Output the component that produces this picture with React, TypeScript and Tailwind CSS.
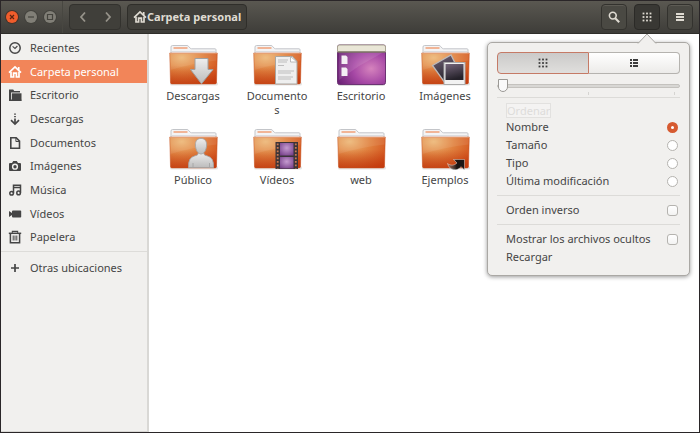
import { useState } from 'react';
import type { ReactNode } from 'react';

/* ---------- symbolic icons ---------- */

type IconName =
  | 'clock' | 'home' | 'desktop' | 'download' | 'document'
  | 'camera' | 'music' | 'video' | 'trash' | 'plus';

const glyphs: Record<IconName, ReactNode> = {
  clock: (
    <g fill="none" stroke="currentColor">
      <circle cx="7" cy="7" r="5.2" strokeWidth="1.5" />
      <path d="M4.6 5.4 7 7.5 9.4 5" strokeWidth="1.1" />
    </g>
  ),
  home: (
    <g fill="none" stroke="currentColor" strokeWidth="1.7">
      <path d="M1 7.6 7 2l6 5.6" />
      <path d="M3 6.8V12h2.6V8.2h2.8V12H11V6.8M10.7 2v3" />
    </g>
  ),
  desktop: (
    <g fill="currentColor">
      <path d="M1 1.500h4.200l1 1.500H12v1.500H3V12H1z" />
      <path d="M3.800 5.300h9.700V13H3.800z" />
      <path d="M1 11.500h12.300V13H1z" />
    </g>
  ),
  download: (
    <g fill="none" stroke="currentColor" strokeWidth="1.7">
      <path d="M7 1.500v1.300M7 4v1.200M7 6.400V12" />
      <path d="M3 8.200 7 12l4-3.800" />
    </g>
  ),
  document: (
    <g fill="none" stroke="currentColor" strokeWidth="1.6">
      <path d="M2.800 1.800h5.400l3.300 3.300v7.200H2.800z" />
      <path d="M7.900 2v3.500h3.500" strokeWidth="1" />
    </g>
  ),
  camera: (
    <path
      fill="currentColor"
      fillRule="evenodd"
      d="M2 4h2l1.200-2h3.600L10 4h2q1 0 1 1v6q0 1-1 1H2q-1 0-1-1V5q0-1 1-1zM7 4.600a3.100 3.100 0 1 0 0 6.200 3.100 3.100 0 0 0 0-6.200zM7 6a1.700 1.700 0 1 1 0 3.400A1.700 1.700 0 0 1 7 6z"
    />
  ),
  music: (
    <g fill="none" stroke="currentColor" strokeWidth="1.5">
      <path d="M5.500 10.300V2.200h7v7.500M5.500 4.400h7" />
      <circle cx="3.600" cy="10.300" r="1.800" />
      <circle cx="10.600" cy="9.900" r="1.800" />
    </g>
  ),
  video: <path fill="currentColor" d="M1 4l3 2V4.400q0-1 1-1h7.400q.8 0 .8.800v5.600q0 .8-.8.800H5q-1 0-1-1V8l-3 2z" />,
  trash: (
    <g fill="none" stroke="currentColor">
      <path d="M.800 3.300h12.400" strokeWidth="1.500" />
      <path d="M4.400 2.800V1.300h5.200v1.500" strokeWidth="1.200" />
      <path d="M2.400 4v8.800h9.200V4" strokeWidth="1.500" />
      <path d="M5.200 5.500v5M7 5.500v5M8.800 5.500v5" />
    </g>
  ),
  plus: <path d="M7 3v8M3 7h8" fill="none" stroke="currentColor" strokeWidth="1.700" />,
};

function Icon({ name, className = 'size-3.5' }: { name: IconName; className?: string }) {
  return (
    <svg viewBox="0 0 14 14" className={`shrink-0 ${className}`} aria-hidden="true">
      {glyphs[name]}
    </svg>
  );
}

function GridGlyph() {
  return (
    <svg viewBox="0 0 10 10" className="size-2.5" fill="currentColor" aria-hidden="true">
      {[0.6, 4.1, 7.6].flatMap((y) =>
        [0.6, 4.1, 7.6].map((x) => <rect key={`${x}-${y}`} x={x} y={y} width="1.8" height="1.8" />),
      )}
    </svg>
  );
}

/* ---------- folder artwork ---------- */

function Gradients() {
  return (
    <svg className="absolute size-0" aria-hidden="true">
      <defs>
        <radialGradient id="folder" cx="0.25" cy="0.15" r="1">
          <stop offset="0" stopColor="#edb878" />
          <stop offset="0.45" stopColor="#e0813f" />
          <stop offset="1" stopColor="#cf4512" />
        </radialGradient>
        <linearGradient id="shade" x1="0" y1="0" x2="0" y2="1">
          <stop offset="0.4" stopColor="#b8330c" stopOpacity="0" />
          <stop offset="1" stopColor="#b8330c" stopOpacity="0.5" />
        </linearGradient>
        <linearGradient id="silver" x1="0" y1="0" x2="0" y2="1">
          <stop offset="0" stopColor="#eeeeee" />
          <stop offset="1" stopColor="#bcbcbc" />
        </linearGradient>
        <radialGradient id="desk" cx="0.7" cy="0.6" r="0.75">
          <stop offset="0" stopColor="#d583bd" />
          <stop offset="0.5" stopColor="#a648a5" />
          <stop offset="1" stopColor="#6d2377" />
        </radialGradient>
        <linearGradient id="photo" x1="0" y1="0" x2="0.3" y2="1">
          <stop offset="0" stopColor="#75667b" />
          <stop offset="1" stopColor="#25222a" />
        </linearGradient>
        <radialGradient id="frame" cx="0.5" cy="0.4" r="0.7">
          <stop offset="0" stopColor="#c59bd0" />
          <stop offset="1" stopColor="#77408a" />
        </radialGradient>
        <linearGradient id="arrow" x1="0" y1="0" x2="1" y2="0">
          <stop offset="0" stopColor="#8b7f7a" stopOpacity="0.6" />
          <stop offset="0.55" stopColor="#1b1513" />
        </linearGradient>
      </defs>
    </svg>
  );
}

function FolderBase() {
  return (
    <>
      <rect x="1" y="38" width="48" height="3.500" rx="1.500" fill="#000" opacity="0.1" />
      <path d="M2 12V3q0-1.500 1.500-1.500h14.500q1 0 1.700 1l1.300 1.500q.6.800 1.600.800h23.400q1 0 1 1v6z" fill="#f4f4f5" stroke="#c3c5c9" />
      <path d="M4.500 4h14" stroke="#f0a177" strokeWidth="1.500" />
      <path d="M3 7.500h43" stroke="#dcdde0" />
      <path d="M.7 9h47.600l-.8 29.500q-.1 1.500-1.500 1.500H3q-1.400 0-1.500-1.500z" fill="url(#folder)" />
      <path d="M.7 9h47.600l-.8 29.500q-.1 1.500-1.500 1.500H3q-1.400 0-1.500-1.500z" fill="url(#shade)" stroke="#c4501f" strokeOpacity="0.6" strokeWidth="0.800" />
      <path d="M1.200 9.500h46.600l-.2 7Q25 19 1.500 26z" fill="#fff" opacity="0.08" />
      <path d="M1 9.500h47" stroke="#e9a983" strokeOpacity="0.6" />
    </>
  );
}

const emblems: Record<string, ReactNode> = {
  Descargas: (
    <path d="M26 14.500h13v11h5L32.500 39.800 21.500 25.500H26z" fill="url(#silver)" stroke="#a0a0a0" />
  ),
  Documentos: (
    <g>
      <path d="M22.500 12.500h17l4.500 5V40h-21.500z" fill="#efefef" stroke="#a9a6a1" />
      <path d="M37.500 12.500v5.500h6.500z" fill="#fff" stroke="#aaa" strokeWidth="0.800" />
      <path d="M25 16h10M25 18h9M25 21.500h6M25 27h16M25 29h13M25 33h15M25 35h13" stroke="#bdbdbd" strokeWidth="1" />
    </g>
  ),
  Imágenes: (
    <g>
      <path d="M11.500 21.500 30 11l6 12-12 16z" fill="url(#photo)" stroke="#bcb8b8" strokeWidth="1.300" />
      <rect x="23" y="18.500" width="21" height="22" fill="#f2f2f2" stroke="#aaa" />
      <rect x="24.500" y="20" width="18" height="16" fill="url(#photo)" />
    </g>
  ),
  Público: (
    <g fill="url(#silver)" stroke="#a5a5a5" strokeWidth="0.900">
      <path d="M19.500 39.500q-.5-10 6-11.500 4-.500 4-3.500h5q0 3 4 3.500 6.500 1.500 6 11.500z" />
      <path d="M32 10.500c4 0 5.800 3 5.600 6.500-.2 5-2.600 9-5.600 9s-5.400-4-5.600-9c-.2-3.500 1.600-6.500 5.600-6.500z" />
      <path d="M24 39.500V35M40.500 39.500V35" />
    </g>
  ),
  Vídeos: (
    <g>
      <rect x="22.500" y="14" width="22.500" height="27" fill="#3c3438" />
      <rect x="27" y="15" width="13.500" height="12.500" fill="url(#frame)" />
      <rect x="27" y="29" width="13.500" height="11.500" fill="url(#frame)" />
      <path d="M24.700 15.500v25M42.800 15.500v25" stroke="#c87a51" strokeWidth="1.800" strokeDasharray="1.800 1.700" />
    </g>
  ),
  Ejemplos: (
    <path d="M32.500 31.500H43.500V42l-3.300-3.300C36 43.500 28.500 43 26.500 35.500c3 2.300 6.500 2.300 9.500-.500z" fill="url(#arrow)" stroke="#fff" strokeOpacity="0.5" strokeWidth="0.800" />
  ),
};

function FolderArt({ name }: { name: string }) {
  return (
    <svg viewBox="0 0 49 42" className="h-[42px] w-[49px] overflow-visible" aria-hidden="true">
      {name === 'Escritorio' ? (
        <g>
          <rect x="1" y="38" width="47" height="4" rx="2" fill="#000" opacity="0.14" />
          <rect x="0.500" y="1" width="48" height="39.500" rx="2" fill="url(#desk)" stroke="#6c3373" />
          <path d="M2 8h45L22 22 2 36z" fill="#fff" opacity="0.1" />
          <path d="M.5 8V3q0-2 2-2h44q2 0 2 2v5z" fill="#e9e6d6" stroke="#aaa593" />
          <path d="M1 8h47" stroke="#5e5947" />
          <path d="M4.500 11.500h4.500l1.500 1.500v7h-6zM4.500 23.500h4.500l1.500 1.500v7h-6z" fill="#f4eef4" />
        </g>
      ) : (
        <>
          <FolderBase />
          {emblems[name]}
        </>
      )}
    </svg>
  );
}

/* ---------- header ---------- */

const headerButton =
  'flex h-[26px] items-center justify-center rounded border border-[#33322e] bg-[#4a4943] text-[#dfdbd2] shadow-[inset_0_1px_0_#5d5b54]';

function Header() {
  return (
    <header className="flex h-[33px] shrink-0 items-center border-b border-[#2f2e2a] bg-linear-to-b from-[#5a5851] to-[#3e3d39] pr-[6px] pl-[5px]">
      <div className="flex gap-[7px]">
        <button aria-label="Cerrar" className="flex size-3 items-center justify-center rounded-full bg-[#f05d2c] text-[#5c2410] shadow-[0_0_0_1px_#45332a]">
          <svg viewBox="0 0 12 12" className="size-3" stroke="currentColor" strokeWidth="1.200"><path d="m4 4 4 4m0-4L4 8" /></svg>
        </button>
        <button aria-label="Minimizar" className="flex size-3 items-center justify-center rounded-full bg-[#817f77] text-[#45443e] shadow-[0_0_0_1px_#43423d]">
          <svg viewBox="0 0 12 12" className="size-3" stroke="currentColor" strokeWidth="1.200"><path d="M3 6h6" /></svg>
        </button>
        <button aria-label="Maximizar" className="flex size-3 items-center justify-center rounded-full bg-[#817f77] text-[#45443e] shadow-[0_0_0_1px_#43423d]">
          <svg viewBox="0 0 12 12" className="size-3" fill="none" stroke="currentColor" strokeWidth="1.200"><path d="M3.500 3.500h5v5h-5z" /></svg>
        </button>
      </div>
      <div className="ml-[6px] h-full w-px bg-[#484741]" />
      <nav aria-label="Historial" className="ml-[6px] flex h-[26px] w-[52px] items-center rounded border border-[#33322e] bg-[#403f3a] text-[#96938a]">
        <button aria-label="Atrás" className="flex flex-1 justify-center">
          <svg viewBox="0 0 10 12" className="h-3 w-2.5" fill="none" stroke="currentColor" strokeWidth="1.800"><path d="M7 1.500 3 6l4 4.500" /></svg>
        </button>
        <button aria-label="Adelante" className="flex flex-1 justify-center">
          <svg viewBox="0 0 10 12" className="h-3 w-2.5" fill="none" stroke="currentColor" strokeWidth="1.800"><path d="m3 1.500 4 4.500-4 4.500" /></svg>
        </button>
      </nav>
      <button className="ml-[6px] flex h-[26px] items-center rounded border border-[#2f2e2a] bg-[#403f3a] px-[5px] text-[11px] font-bold whitespace-nowrap text-[#dfdbd2]">
        <Icon name="home" />
        Carpeta personal
      </button>
      <div className="ml-auto flex gap-[7px]">
        <button aria-label="Buscar" className={`w-[26px] ${headerButton}`}>
          <svg viewBox="0 0 12 12" className="size-3" fill="none" stroke="currentColor"><circle cx="4.800" cy="4.600" r="3.400" strokeWidth="1.600" /><path d="m7.200 7.200 4 4" strokeWidth="2" /></svg>
        </button>
        <button aria-label="Vista" className="flex h-[26px] w-[26px] items-center justify-center rounded border border-[#2b2a27] bg-[#393834] text-[#dfdbd2]">
          <GridGlyph />
        </button>
        <button aria-label="Menú" className={`w-[26px] ${headerButton}`}>
          <svg viewBox="0 0 10 10" className="size-2.5" fill="currentColor"><path d="M1 1h8v2H1zM1 4h8v2H1zM1 7h8v2H1z" /></svg>
        </button>
      </div>
    </header>
  );
}

/* ---------- sidebar ---------- */

const places: { icon: IconName; label: string }[] = [
  { icon: 'clock', label: 'Recientes' },
  { icon: 'home', label: 'Carpeta personal' },
  { icon: 'desktop', label: 'Escritorio' },
  { icon: 'download', label: 'Descargas' },
  { icon: 'document', label: 'Documentos' },
  { icon: 'camera', label: 'Imágenes' },
  { icon: 'music', label: 'Música' },
  { icon: 'video', label: 'Vídeos' },
  { icon: 'trash', label: 'Papelera' },
];

function Sidebar() {
  return (
    <aside className="w-[148px] shrink-0 border-r-2 border-b border-[#d9d8d5] bg-[#f1f0ee] pt-[2px]">
      <ul className="flex h-[213px] flex-col">
        {places.map((p, i) => (
          <li key={p.label} className="min-h-0 flex-1">
            <a
              href="#"
              className={`flex h-full items-center gap-2 pl-[7px] ${i === 1 ? 'bg-[#f28559] text-white' : 'text-[#454545]'}`}
            >
              <Icon name={p.icon} />
              {p.label}
            </a>
          </li>
        ))}
      </ul>
      <div className="mt-[2px] border-t border-[#dddcd9] pt-[5px]">
        <a href="#" className="flex h-[22px] items-center gap-2 pl-[7px] text-[#454545]">
          <Icon name="plus" />
          Otras ubicaciones
        </a>
      </div>
    </aside>
  );
}

/* ---------- view popover ---------- */

const sortOptions = ['Nombre', 'Tamaño', 'Tipo', 'Última modificación'];

const checkbox =
  'size-[11px] appearance-none rounded-[3px] border border-[#b5b3af] bg-linear-to-b from-white to-[#f3f3f2] checked:from-[#e0592a] checked:to-[#e0592a]';

function ViewPopover() {
  const [sort, setSort] = useState('Nombre');
  return (
    <section
      aria-label="Opciones de vista"
      className="absolute top-[8px] right-[9px] w-[203px] rounded-[5px] border border-[#aaa8a4] bg-[#f1f0ee] px-[9px] pt-[9px] pb-[9px] shadow-[0_1px_4px_#00000066]"
    >
      <svg viewBox="0 0 20 11" className="absolute -top-[10px] right-[32px] h-[11px] w-5" aria-hidden="true">
        <path d="M1 10.500 10 1l9 9.500V11H1z" fill="#f1f0ee" />
        <path d="M1 10.500 10 1l9 9.500" fill="none" stroke="#aaa8a4" />
      </svg>
      <div className="flex h-[22px] text-[#3c3c3c]">
        <button aria-label="Iconos" className="flex flex-1 items-center justify-center rounded-l border border-[#c57a66] bg-linear-to-b from-[#cbcac9] to-[#e0dfdd]">
          <GridGlyph />
        </button>
        <button aria-label="Lista" className="flex flex-1 items-center justify-center rounded-r border border-l-0 border-[#b5b3af] bg-linear-to-b from-white to-[#ecebe9]">
          <svg viewBox="0 0 10 10" className="size-2.5" fill="currentColor"><path d="M1 1h2v2H1zM4 1h5v2H4zM1 4h2v2H1zM4 4h5v2H4zM1 7h2v2H1zM4 7h5v2H4z" /></svg>
        </button>
      </div>
      <input
        type="range"
        aria-label="Tamaño de los iconos"
        min={0}
        max={4}
        defaultValue={0}
        className="mt-[5px] block h-[13px] w-full appearance-none bg-transparent [&::-webkit-slider-runnable-track]:h-1 [&::-webkit-slider-runnable-track]:rounded-full [&::-webkit-slider-runnable-track]:border [&::-webkit-slider-runnable-track]:border-[#c4c2be] [&::-webkit-slider-runnable-track]:bg-[#d8d7d4] [&::-webkit-slider-thumb]:-mt-[6px] [&::-webkit-slider-thumb]:h-[13px] [&::-webkit-slider-thumb]:w-[10px] [&::-webkit-slider-thumb]:appearance-none [&::-webkit-slider-thumb]:rounded-t-[4px] [&::-webkit-slider-thumb]:rounded-b-full [&::-webkit-slider-thumb]:border [&::-webkit-slider-thumb]:border-[#9b9995] [&::-webkit-slider-thumb]:bg-[#fafafa]"
      />
      <div className="flex h-1 items-start justify-end">
        <i className="mr-[85px] h-[3px] w-px bg-[#d5d4d1]" />
        <i className="mr-[5px] h-[3px] w-px bg-[#d5d4d1]" />
      </div>
      <hr className="mt-px border-[#dcdbd8]" />
      <fieldset className="mt-[5px] px-[9px]">
        <legend className="h-[15px] border border-[#e2e1df] bg-[#f4f3f2] leading-[13px] text-[#dddcda]">Ordenar</legend>
        {sortOptions.map((option) => (
          <label key={option} className="-mr-[7px] flex h-[18px] items-center justify-between">
            {option}
            <input
              type="radio"
              name="sort"
              checked={sort === option}
              onChange={() => setSort(option)}
              className="size-[11px] appearance-none rounded-full border border-[#b5b3af] bg-white checked:border-4 checked:border-[#d65a30]"
            />
          </label>
        ))}
      </fieldset>
      <hr className="mt-[5px] border-[#dcdbd8]" />
      <label className="flex h-7 items-center justify-between pr-[2px] pl-[9px]">
        Orden inverso
        <input type="checkbox" className={checkbox} />
      </label>
      <hr className="border-[#dcdbd8]" />
      <label className="mt-[5px] flex h-[18px] items-center justify-between pr-[2px] pl-[9px] whitespace-nowrap">
        Mostrar los archivos ocultos
        <input type="checkbox" className={checkbox} />
      </label>
      <button className="flex h-[18px] w-full items-center pl-[9px]">Recargar</button>
    </section>
  );
}

/* ---------- window ---------- */

const folders = ['Descargas', 'Documentos', 'Escritorio', 'Imágenes', 'Público', 'Vídeos', 'web', 'Ejemplos'];

export default function App() {
  return (
    <div className="flex min-h-screen flex-col border border-[#2a2628] bg-white font-['Noto_Sans',sans-serif] text-[11px] leading-[14px] text-[#454545]">
      <Gradients />
      <Header />
      <div className="relative flex flex-1">
        <Sidebar />
        <main className="grid flex-1 grid-cols-[repeat(auto-fill,84px)] content-start pt-[10px] pr-[206px] pl-[2px]">
          {folders.map((name) => (
            <figure key={name} className="flex h-[84px] flex-col items-center">
              <FolderArt name={name} />
              <figcaption className="mt-[3px] w-[62px] text-center break-words">{name}</figcaption>
            </figure>
          ))}
        </main>
        <ViewPopover />
      </div>
    </div>
  );
}
